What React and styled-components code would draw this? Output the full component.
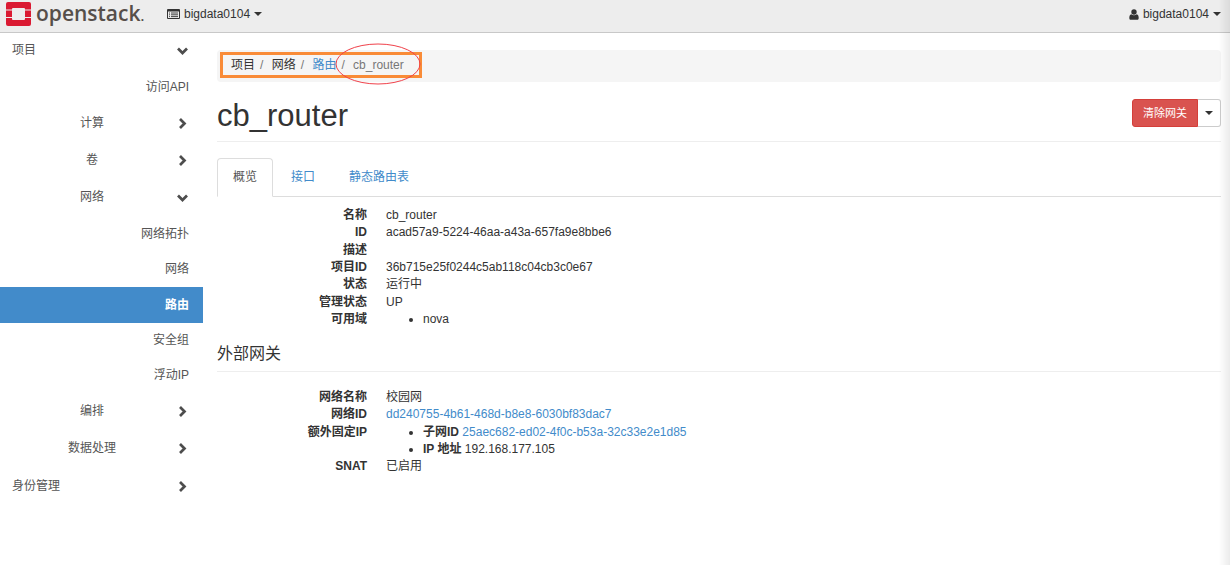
import React from "react";
import styled, { createGlobalStyle, css } from "styled-components";

const GlobalStyle = createGlobalStyle`
  *, *::before, *::after { box-sizing: border-box; }
  body {
    margin: 0;
    background: #fff;
    color: #333;
    font: 12px/17px "Liberation Sans", "Noto Sans CJK SC", sans-serif;
  }
  a { color: #428bca; text-decoration: none; }
  ul, ol, dl, dd, h1, h2 { margin: 0; padding: 0; }
  ul, ol { list-style: none; }
  button { font: inherit; cursor: pointer; }
`;

const Page = styled.div`
  display: flex;
  flex-direction: column;
  min-height: 100vh;
`;

const EdgeShade = styled.div`
  position: fixed;
  inset: 0 0 0 auto;
  width: 11px;
  background: linear-gradient(to right, rgba(0, 0, 0, 0), rgba(0, 0, 0, 0.08));
  pointer-events: none;
`;

const TopBar = styled.header`
  display: flex;
  align-items: center;
  height: 33px;
  padding: 0 9px 4px 6px;
  background: #ededed;
  border-bottom: 1px solid #c8c8c8;
`;

const Brand = styled.a`
  display: flex;
  align-items: center;
  gap: 5px;
  width: 161px;
  color: #564f4a;
`;

const Wordmark = styled.span`
  font: 600 21px/26px "Open Sans", sans-serif;
`;

const WordmarkDot = styled.span`
  font-size: 14px;
`;

const MenuButton = styled.button`
  display: flex;
  align-items: center;
  gap: 4px;
  padding: 0;
  border: 0;
  background: none;
  color: #333;
  margin-left: ${(p) => (p.$end ? "auto" : "0")};
`;

const Caret = styled.span`
  border: 4px solid transparent;
  border-top-color: currentColor;
  border-bottom: 0;
`;

const Body = styled.div`
  display: flex;
  flex: 1;
`;

const Sidebar = styled.nav`
  flex: 0 0 203px;
`;

const SubList = styled.ul`
  padding: ${(p) => (p.$outer ? "3px 0 2px" : "1px 0 0")};
`;

const GroupButton = styled.button`
  display: flex;
  align-items: center;
  gap: 4px;
  width: 100%;
  height: ${(p) => (p.$top ? "34px" : "37px")};
  padding: 0 14px 0 12px;
  border: 0;
  background: none;
  color: #555;
  text-align: ${(p) => (p.$top ? "left" : "center")};
`;

const GroupLabel = styled.span`
  flex: 1;
`;

const Leaf = styled.a`
  display: flex;
  align-items: center;
  justify-content: flex-end;
  height: 35px;
  padding: 0 14px;
  color: #555;
  ${(p) =>
    p.$active &&
    css`
      height: 36px;
      background: #428bca;
      color: #fff;
      font-weight: 700;
    `}
`;

const Content = styled.main`
  flex: 1;
  min-width: 0;
  padding: 17px 9px 20px 14px;
`;

const Breadcrumb = styled.nav`
  display: flex;
  align-items: center;
  height: 32px;
  padding: 0 3px 2px;
  border-radius: 4px;
  background: #f5f5f5;
`;

const CrumbList = styled.ol`
  display: flex;
  align-items: center;
  height: 26px;
  padding: 0 15px 0 8px;
  border: 3px solid #f98b37;
`;

const Crumb = styled.li`
  position: relative;
  color: ${(p) => (p.$current ? "#777" : "#333")};
  &:not(:first-child)::before {
    content: "/\\00a0";
    padding: 0 5px;
    color: #777;
  }
`;

const Ring = styled.svg`
  position: absolute;
  top: -13px;
  right: -16px;
  width: 84px;
  height: 42px;
  overflow: visible;
  pointer-events: none;
`;

const TitleRow = styled.div`
  display: flex;
  align-items: center;
  justify-content: space-between;
  height: 60px;
  padding-top: 2px;
  border-bottom: 1px solid #eee;
`;

const Title = styled.h1`
  font-size: 31px;
  line-height: 34px;
  font-weight: 400;
  padding-top: 6px;
`;

const ButtonGroup = styled.div`
  display: flex;
`;

const DangerButton = styled.button`
  height: 28px;
  padding: 2px 10px 0;
  border: 1px solid #d43f3a;
  border-radius: 3px 0 0 3px;
  background: #d9534f;
  color: #fff;
  font-size: 11px;
`;

const CaretButton = styled.button`
  display: flex;
  align-items: center;
  justify-content: center;
  width: 23px;
  height: 28px;
  padding: 0;
  border: 1px solid #ccc;
  border-left: 0;
  border-radius: 0 3px 3px 0;
  background: #fff;
  color: #333;
`;

const Tabs = styled.ul`
  display: flex;
  gap: 2px;
  margin-top: 16px;
  border-bottom: 1px solid #ddd;
`;

const Tab = styled.a`
  display: flex;
  align-items: center;
  height: 39px;
  margin-bottom: -1px;
  padding: 0 15px;
  border: 1px solid transparent;
  border-radius: 4px 4px 0 0;
  ${(p) =>
    p.$active &&
    css`
      border-color: #ddd #ddd #fff;
      background: #fff;
      color: #555;
    `}
`;

const Details = styled.dl`
  padding-top: ${(p) => (p.$section ? "17px" : "10px")};
`;

const Row = styled.div`
  display: grid;
  grid-template-columns: 150px 1fr;
  column-gap: 19px;
  min-height: 17px;
  &:nth-child(3n + 2) { margin-bottom: 1px; }
`;

const Term = styled.dt`
  font-weight: 700;
  text-align: right;
`;

const Bullets = styled.ul`
  padding-left: 37px;
  list-style: disc;
`;

const SectionTitle = styled.h2`
  margin-top: 12px;
  padding: 3px 0 6px;
  border-bottom: 1px solid #eee;
  font-size: 16px;
  line-height: 22px;
  font-weight: 400;
`;

function Chevron({ open }) {
  return (
    <svg width="13" height="13" viewBox="0 0 13 13" fill="none" stroke="#4d4d4d" strokeWidth="2.700" aria-hidden="true">
      <path d={open ? "M2 4.500 6.500 9 11 4.500" : "M4 2 8.500 6.500 4 11"} />
    </svg>
  );
}

function Logo() {
  return (
    <svg width="25" height="24" viewBox="0 0 25 24" aria-hidden="true">
      <path
        fill="#da1a32"
        d="M2 0h21a2 2 0 0 1 2 2v5.500h-6V7a1 1 0 0 0-1-1H7a1 1 0 0 0-1 1v.5H0V2a2 2 0 0 1 2-2ZM0 8.500h6v6.500H0ZM19 8.500h6v6.500h-6ZM0 16h6v1a1 1 0 0 0 1 1h11a1 1 0 0 0 1-1v-1h6V22a2 2 0 0 1-2 2H2a2 2 0 0 1-2-2Z"
      />
    </svg>
  );
}

function ListIcon() {
  return (
    <svg width="13" height="11" viewBox="0 0 13 11" aria-hidden="true">
      <path fill="#333" fillRule="evenodd" d="M1 0h11a1 1 0 0 1 1 1v8a1 1 0 0 1-1 1H1a1 1 0 0 1-1-1V1a1 1 0 0 1 1-1Zm0 2.500V9h11V2.500Z" />
      <path stroke="#333" d="M2 4h1M4 4h7M2 5.800h1M4 5.800h7M2 7.600h1M4 7.600h7" strokeWidth=".9" />
    </svg>
  );
}

function UserIcon() {
  return (
    <svg width="10" height="11" viewBox="0 0 10 11" fill="#333" aria-hidden="true">
      <circle cx="5" cy="3" r="2.700" />
      <path d="M2.300 5.200C.8 5.600.3 7 .3 8.900c0 1.200.6 1.900 1.600 1.900h6.200c1 0 1.600-.7 1.600-1.900 0-1.900-.5-3.300-2-3.700A3.700 3.700 0 0 1 5 6.300a3.700 3.700 0 0 1-2.700-1.100Z" />
    </svg>
  );
}

function Group({ label, open, top, children }) {
  return (
    <li>
      <GroupButton type="button" $top={top} aria-expanded={!!open}>
        <GroupLabel>{label}</GroupLabel>
        <Chevron open={open} />
      </GroupButton>
      {children && <SubList $outer={top}>{children}</SubList>}
    </li>
  );
}

function NavLeaf({ label, active }) {
  return (
    <li>
      <Leaf href="#" $active={active} aria-current={active ? "page" : undefined}>{label}</Leaf>
    </li>
  );
}

function Detail({ term, children }) {
  return (
    <Row>
      <Term>{term}</Term>
      <dd>{children}</dd>
    </Row>
  );
}

export default function App() {
  return (
    <Page>
      <GlobalStyle />
      <TopBar>
        <Brand href="#">
          <Logo />
          <Wordmark>openstack<WordmarkDot>.</WordmarkDot></Wordmark>
        </Brand>
        <MenuButton type="button">
          <ListIcon />
          bigdata0104
          <Caret />
        </MenuButton>
        <MenuButton type="button" $end>
          <UserIcon />
          bigdata0104
          <Caret />
        </MenuButton>
      </TopBar>
      <Body>
        <Sidebar>
          <ul>
            <Group label="项目" top open>
              <NavLeaf label="访问API" />
              <Group label="计算" />
              <Group label="卷" />
              <Group label="网络" open>
                <NavLeaf label="网络拓扑" />
                <NavLeaf label="网络" />
                <NavLeaf label="路由" active />
                <NavLeaf label="安全组" />
                <NavLeaf label="浮动IP" />
              </Group>
              <Group label="编排" />
              <Group label="数据处理" />
            </Group>
            <Group label="身份管理" top />
          </ul>
        </Sidebar>
        <Content>
          <Breadcrumb>
            <CrumbList>
              <Crumb>项目</Crumb>
              <Crumb>网络</Crumb>
              <Crumb><a href="#">路由</a></Crumb>
              <Crumb $current>
                cb_router
                <Ring viewBox="0 0 84 42" aria-hidden="true">
                  <ellipse cx="42" cy="20" rx="42" ry="20" fill="none" stroke="#f0414a" />
                </Ring>
              </Crumb>
            </CrumbList>
          </Breadcrumb>
          <TitleRow>
            <Title>cb_router</Title>
            <ButtonGroup>
              <DangerButton type="button">清除网关</DangerButton>
              <CaretButton type="button" aria-label="更多"><Caret /></CaretButton>
            </ButtonGroup>
          </TitleRow>
          <Tabs>
            <li><Tab href="#" $active>概览</Tab></li>
            <li><Tab href="#">接口</Tab></li>
            <li><Tab href="#">静态路由表</Tab></li>
          </Tabs>
          <Details>
            <Detail term="名称">cb_router</Detail>
            <Detail term="ID">acad57a9-5224-46aa-a43a-657fa9e8bbe6</Detail>
            <Detail term="描述" />
            <Detail term="项目ID">36b715e25f0244c5ab118c04cb3c0e67</Detail>
            <Detail term="状态">运行中</Detail>
            <Detail term="管理状态">UP</Detail>
            <Detail term="可用域">
              <Bullets><li>nova</li></Bullets>
            </Detail>
          </Details>
          <SectionTitle>外部网关</SectionTitle>
          <Details $section>
            <Detail term="网络名称">校园网</Detail>
            <Detail term="网络ID"><a href="#">dd240755-4b61-468d-b8e8-6030bf83dac7</a></Detail>
            <Detail term="额外固定IP">
              <Bullets>
                <li><b>子网ID</b> <a href="#">25aec682-ed02-4f0c-b53a-32c33e2e1d85</a></li>
                <li><b>IP 地址</b> 192.168.177.105</li>
              </Bullets>
            </Detail>
            <Detail term="SNAT">已启用</Detail>
          </Details>
        </Content>
      </Body>
      <EdgeShade />
    </Page>
  );
}
